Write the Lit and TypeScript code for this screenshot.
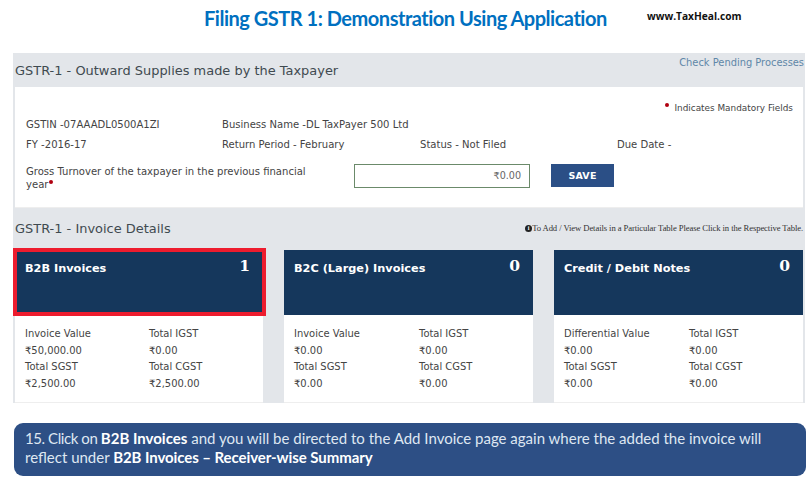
import { LitElement, html, css } from "lit";
import { customElement } from "lit/decorators.js";

const cards = [
  { title: "B2B Invoices", count: "1", sel: true, cells: ["Invoice Value", "Total IGST", "₹50,000.00", "₹0.00", "Total SGST", "Total CGST", "₹2,500.00", "₹2,500.00"] },
  { title: "B2C (Large) Invoices", count: "0", sel: false, cells: ["Invoice Value", "Total IGST", "₹0.00", "₹0.00", "Total SGST", "Total CGST", "₹0.00", "₹0.00"] },
  { title: "Credit / Debit Notes", count: "0", sel: false, cells: ["Differential Value", "Total IGST", "₹0.00", "₹0.00", "Total SGST", "Total CGST", "₹0.00", "₹0.00"] },
];

@customElement("app-root")
export class AppRoot extends LitElement {
  static styles = css`
    :host { display: block; width: 812px; height: 488px; background: #fff; overflow: hidden; font-family: "DejaVu Sans", sans-serif; color: #444; }
    .top { height: 53px; display: flex; align-items: flex-start; }
    .title { margin: 5px 0 0 204px; width: 443px; font: 700 20px/26px Lato, sans-serif; letter-spacing: -0.48px; color: #0070c0; white-space: nowrap; }
    .site { margin-top: 8px; font: 700 10.2px/16px "Open Sans", sans-serif; color: #111; white-space: nowrap; }
    .panel { margin-left: 13px; width: 792px; height: 350px; background: #e3e6ea; padding: 0 2px; box-sizing: border-box; }
    .phead { height: 34px; display: flex; justify-content: space-between; }
    .h { font-size: 12.95px; line-height: 16px; margin-top: 9px; color: #3f4a50; white-space: nowrap; }
    .phead .h { margin-top: 10px; }
    .link { font-size: 9.9px; line-height: 14px; margin-top: 3px; margin-right: -1px; color: #5f87a8; white-space: nowrap; }
    .box { height: 121px; background: #fff; box-sizing: border-box; padding: 13px 10px 0 11px; font-size: 10.05px; line-height: 14px; border-bottom: 1px solid #eee; }
    .mand { display: flex; justify-content: flex-end; height: 14px; font-size: 8.9px; color: #444; margin-top: 1px; }
    .dot { width: 4px; height: 4px; border-radius: 50%; background: #b00010; margin: 2px 5px 0 0; }
    .row { display: grid; grid-template-columns: 196px 198px 197px 1fr; height: 20px; align-items: center; white-space: nowrap; }
    .gross { display: flex; align-items: flex-start; margin-top: 9px; }
    .glabel { width: 328px; line-height: 13px; padding: 1px 40px 0 0; box-sizing: border-box; }
    .req { display: inline-block; width: 4px; height: 4px; border-radius: 50%; background: #b00010; vertical-align: 4px; margin-left: 1px; }
    .input { width: 176px; height: 24px; border: 1px solid #6b8a6a; box-sizing: border-box; display: flex; align-items: center; justify-content: flex-end; padding-right: 8px; font-size: 9.6px; color: #666; }
    .save { margin-left: 21px; width: 63px; height: 23px; background: #2b4f86; color: #fff; font-size: 9.5px; font-weight: 700; display: flex; align-items: center; justify-content: center; letter-spacing: 0.2px; }
    .shead { height: 42px; display: flex; justify-content: space-between; align-items: flex-start; }
    .shead .h { margin-top: 13px; }
    .note { margin-top: 14px; font: 8.65px/12px "Liberation Serif", serif; color: #333; white-space: nowrap; display: flex; align-items: center; letter-spacing: -0.09px; }
    .i { width: 7px; height: 7px; border-radius: 50%; background: #222; color: #fff; font-size: 6px; line-height: 7px; text-align: center; font-weight: 700; }
    .cards { display: flex; justify-content: space-between; }
    .card { width: 249px; background: #fff; height: 152px; border-bottom: 1px solid #eee; }
    .card.sel { width: 248px; }
    .chead { height: 65px; background: #15375c; color: #fff; display: flex; justify-content: space-between; box-sizing: border-box; padding: 12px 13px 0 10px; }
    .ctitle { font-size: 11.3px; font-weight: 700; line-height: 14px; white-space: nowrap; }
    .n { font: 700 15.5px/16px "DejaVu Serif", serif; margin-top: -4px; }
    .card.sel .chead { margin: -2px -3px 0 -2px; height: 68px; border: 4px solid #ed1c2e; padding: 10px 12px 0 8px; }
    .cbody { display: grid; grid-template-columns: 125px 1fr; padding: 11px 0 0 10px; font-size: 9.95px; line-height: 16.5px; color: #444; white-space: nowrap; }
    .card.sel .cbody { grid-template-columns: 124px 1fr; padding-top: 10px; }
    .callout { margin: 20px 0 0 14px; width: 792px; height: 53px; background: #2d4f85; border-radius: 9px; box-sizing: border-box; padding: 6px 11px 0; color: #dfe7f2; font: 400 15px/19px Lato, sans-serif; white-space: nowrap; }
    .callout b { color: #fff; }
    .lead { letter-spacing: -0.42px; }
    .tight { letter-spacing: -0.08px; }
  `;

  render() {
    return html`
      <div class="top">
        <div class="title">Filing GSTR 1: Demonstration Using Application</div>
        <div class="site">www.TaxHeal.com</div>
      </div>
      <div class="panel">
        <div class="phead">
          <div class="h">GSTR-1 - Outward Supplies made by the Taxpayer</div>
          <div class="link">Check Pending Processes</div>
        </div>
        <div class="box">
          <div class="mand"><span class="dot"></span>Indicates Mandatory Fields</div>
          <div class="row"><span>GSTIN -07AAADL0500A1ZI</span><span>Business Name -DL TaxPayer 500 Ltd</span></div>
          <div class="row"><span>FY -2016-17</span><span>Return Period - February</span><span>Status - Not Filed</span><span>Due Date -</span></div>
          <div class="gross">
            <div class="glabel">Gross Turnover of the taxpayer in the previous financial year<span class="req"></span></div>
            <div class="input">₹0.00</div>
            <div class="save">SAVE</div>
          </div>
        </div>
        <div class="shead">
          <div class="h">GSTR-1 - Invoice Details</div>
          <div class="note"><span class="i">i</span>To Add / View Details in a Particular Table Please Click in the Respective Table.</div>
        </div>
        <div class="cards">
          ${cards.map(c => html`
            <div class="card ${c.sel ? "sel" : ""}">
              <div class="chead"><span class="ctitle">${c.title}</span><span class="n">${c.count}</span></div>
              <div class="cbody">${c.cells.map(t => html`<span>${t}</span>`)}</div>
            </div>`)}
        </div>
      </div>
      <div class="callout"><span class="lead">15. Click on </span><b>B2B Invoices</b> and you will be directed to the Add Invoice page again where the added the invoice will<br>reflect under <b class="tight">B2B Invoices – Receiver-wise Summary</b></div>
    `;
  }
}
